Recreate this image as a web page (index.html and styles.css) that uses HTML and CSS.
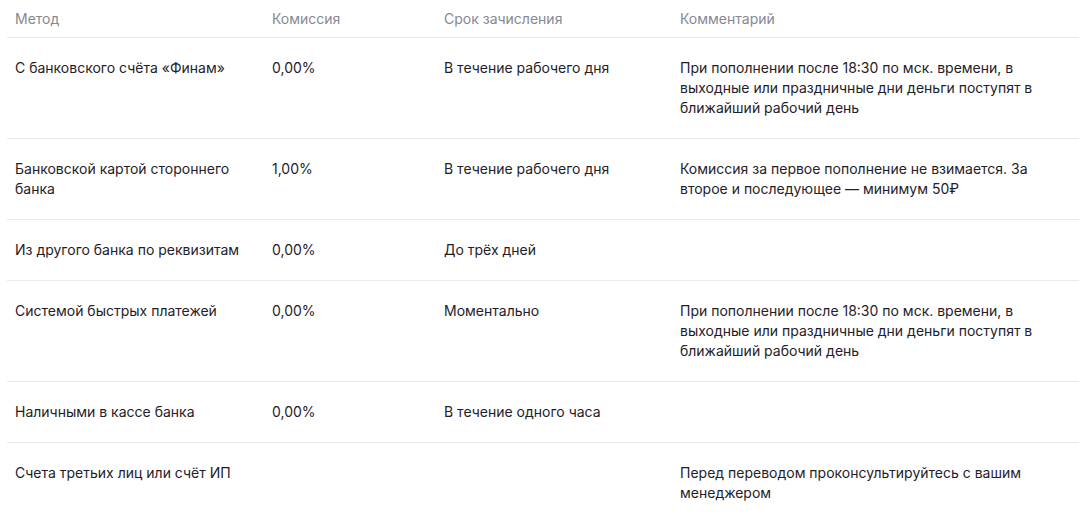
FILE: index.html
```html
<!DOCTYPE html>
<html lang="ru">
<head>
<meta charset="utf-8">
<link rel="stylesheet" href="styles.css">
</head>
<body>
<div class="wrap">
<table class="methods">
  <colgroup>
    <col class="c1"><col class="c2"><col class="c3"><col class="c4">
  </colgroup>
  <thead>
    <tr><th>Метод</th><th>Комиссия</th><th>Срок зачисления</th><th>Комментарий</th></tr>
  </thead>
  <tbody>
    <tr><td>С банковского счёта «Финам»</td><td>0,00%</td><td>В течение рабочего дня</td><td>При пополнении после 18:30 по мск. времени, в выходные или праздничные дни деньги поступят в ближайший рабочий день</td></tr>
    <tr><td>Банковской картой стороннего банка</td><td>1,00%</td><td>В течение рабочего дня</td><td>Комиссия за первое пополнение не взимается. За второе и последующее — минимум 50₽</td></tr>
    <tr><td>Из другого банка по реквизитам</td><td>0,00%</td><td>До трёх дней</td><td></td></tr>
    <tr><td>Системой быстрых платежей</td><td>0,00%</td><td>Моментально</td><td>При пополнении после 18:30 по мск. времени, в выходные или праздничные дни деньги поступят в ближайший рабочий день</td></tr>
    <tr><td>Наличными в кассе банка</td><td>0,00%</td><td>В течение одного часа</td><td></td></tr>
    <tr><td>Счета третьих лиц или счёт ИП</td><td></td><td></td><td>Перед переводом проконсультируйтесь с вашим менеджером</td></tr>
  </tbody>
</table>
</div>
</body>
</html>
```
FILE: styles.css
```css
html, body { margin: 0; padding: 0; background: #fff; }
body { font-family: Inter, "Noto Sans", sans-serif; color: #1f2128; }
.wrap { padding: 0 12px 0 7px; }
.methods { width: 100%; border-collapse: collapse; table-layout: fixed; font-size: 14px; line-height: 20px; }
.c1 { width: 257px; }
.c2 { width: 172px; }
.c3 { width: 236px; }
.methods th { text-align: left; font-weight: 400; color: #868892; padding: 9px 8px 8px; border-bottom: 1px solid #e9eaee; vertical-align: top; }
.methods td { padding: 20px 8px; vertical-align: top; border-bottom: 1px solid #e9eaee; }
.methods td:last-child, .methods th:last-child { padding-right: 16px; }
.methods tbody tr:last-child td { border-bottom: none; }
```
